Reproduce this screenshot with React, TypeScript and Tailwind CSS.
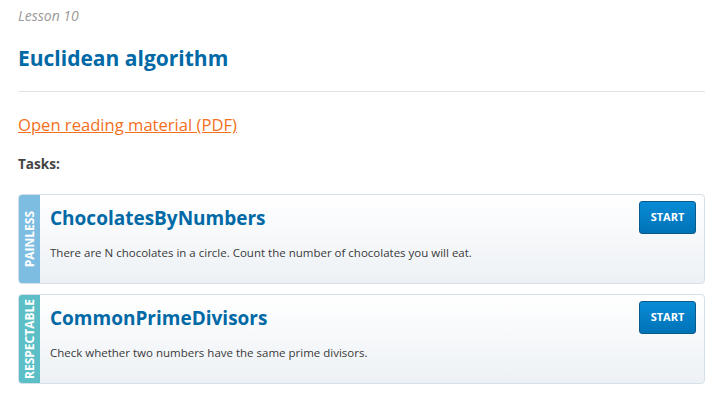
const tasks = [
    {
        name: 'ChocolatesByNumbers',
        description: 'There are N chocolates in a circle. Count the number of chocolates you will eat.',
        level: 'PAINLESS',
        stripe: 'bg-[#7dbde2]',
    },
    {
        name: 'CommonPrimeDivisors',
        description: 'Check whether two numbers have the same prime divisors.',
        level: 'RESPECTABLE',
        stripe: 'bg-[#5cbfc7]',
    },
];

export default function App() {
    return (
        <div className="min-h-screen bg-white pl-[18px] pr-[12px] font-['Open_Sans',sans-serif] text-[#333]">
            <p className="pt-[6px] text-[14px] italic leading-[20px] text-[#999]">Lesson 10</p>
            <h1 className="mt-[20px] text-[21px] font-bold leading-[24px] text-[#0069a6]">Euclidean algorithm</h1>
            <hr className="mt-[21px] border-t border-[#dde3e8]" />
            <a href="#" className="mt-[22px] block w-fit text-[16.6px] leading-[22px] text-[#f37021] underline">
                Open reading material (PDF)
            </a>
            <p className="mt-[19px] text-[13.6px] font-bold leading-[18px] text-[#444]">Tasks:</p>

            <div className="mt-[21px] flex flex-col gap-[10px]">
                {tasks.map((task) => (
                    <div
                        key={task.name}
                        className="flex h-[90px] overflow-hidden rounded-[4px] border border-[#d6e0e8] bg-gradient-to-b from-white to-[#edf1f5]"
                    >
                        <div className={`flex w-[21px] items-center justify-center ${task.stripe}`}>
                            <span className="rotate-180 text-[12px] font-bold text-white [writing-mode:vertical-rl]">
                                {task.level}
                            </span>
                        </div>
                        <div className="flex-1 pl-[10px] pt-[10px]">
                            <h3 className="text-[19px] font-bold leading-[26px] text-[#0069a6]">{task.name}</h3>
                            <p className="mt-[14px] text-[11.5px] leading-[16px] text-[#3a3a3a]">{task.description}</p>
                        </div>
                        <div className="pr-[8px] pt-[6px]">
                            <button className="h-[33px] w-[57px] rounded-[3px] border border-[#0b5a8c] bg-gradient-to-b from-[#0a8bd6] to-[#0073b7] text-[11px] font-bold text-white">
                                START
                            </button>
                        </div>
                    </div>
                ))}
            </div>
        </div>
    );
}
